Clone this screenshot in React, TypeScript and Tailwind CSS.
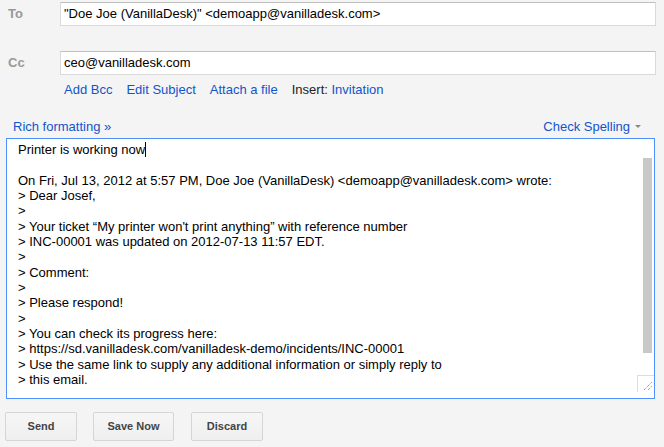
import React from "react";

const lines = [
  "On Fri, Jul 13, 2012 at 5:57 PM, Doe Joe (VanillaDesk) <demoapp@vanilladesk.com> wrote:",
  "> Dear Josef,",
  ">",
  "> Your ticket \u201cMy printer won't print anything\u201d with reference number",
  "> INC-00001 was updated on 2012-07-13 11:57 EDT.",
  ">",
  "> Comment:",
  ">",
  "> Please respond!",
  ">",
  "> You can check its progress here:",
  "> https://sd.vanilladesk.com/vanilladesk-demo/incidents/INC-00001",
  "> Use the same link to supply any additional information or simply reply to",
  "> this email.",
];

function Btn({ label, w }: { label: string; w: string }) {
  return (
    <div
      className={`${w} h-[29px] flex items-center justify-center rounded-[2px] border border-[#d5d5d5] bg-gradient-to-b from-[#f6f6f6] to-[#efefef] text-[11px] font-bold text-[#444]`}
    >
      {label}
    </div>
  );
}

export default function App() {
  return (
    <div
      className="w-[664px] h-[447px] bg-[#f4f4f4] overflow-hidden flex flex-col text-[13px] text-[#222]"
      style={{ fontFamily: '"Liberation Sans", Arial, sans-serif' }}
    >
      {/* To row */}
      <div className="flex items-center mt-[2px]">
        <div className="w-[60px] pl-[8px] font-bold text-[#999]">To</div>
        <div className="w-[596px] h-[24px] bg-white border border-[#d9d9d9] border-t-[#c0c0c0] flex items-center pl-[3px] text-black">
          "Doe Joe (VanillaDesk)" &lt;demoapp@vanilladesk.com&gt;
        </div>
      </div>
      {/* Cc row */}
      <div className="flex items-center mt-[25px]">
        <div className="w-[60px] pl-[8px] font-bold text-[#999]">Cc</div>
        <div className="w-[596px] h-[24px] bg-white border border-[#d9d9d9] border-t-[#c0c0c0] flex items-center pl-[3px] text-black">
          ceo@vanilladesk.com
        </div>
      </div>
      {/* links row */}
      <div className="flex items-center pl-[64px] mt-[7px] leading-[15px] gap-[14px]">
        <span className="text-[#15c]">Add Bcc</span>
        <span className="text-[#15c]">Edit Subject</span>
        <span className="text-[#15c]">Attach a file</span>
        <span>
          <span className="text-[#222]">Insert: </span>
          <span className="text-[#15c]">Invitation</span>
        </span>
      </div>
      {/* rich formatting row */}
      <div className="flex items-center justify-between mt-[22px] pl-[13px] pr-[23px] leading-[15px]">
        <span className="text-[#15c]">Rich formatting »</span>
        <span className="flex items-center gap-[5px]">
          <span className="text-[#15c]">Check Spelling</span>
          <svg width="6" height="4" viewBox="0 0 6 4" className="mt-[1px]">
            <path d="M0 0 L6 0 L3 3 Z" fill="#888" />
          </svg>
        </span>
      </div>
      {/* body */}
      <div className="relative ml-[6px] mt-[4px] w-[649px] h-[261px] bg-white border border-[#4d90fe]">
        <div className="pl-[11px] pt-[3px] leading-[15.33px] text-black whitespace-pre">
          <div>
            Printer is working now
            <span className="inline-block w-[1px] h-[15px] bg-black align-[-3px]" />
          </div>
          <div>&nbsp;</div>
          {lines.map((l, i) => (
            <div key={i}>{l}</div>
          ))}
        </div>
        {/* scrollbar thumb */}
        <div className="absolute left-[636px] top-[19px] w-[9px] h-[195px] bg-[#c8c8c8]" />
        {/* resizer */}
        <div className="absolute left-[630px] top-[236px] w-[17px] h-[17px] bg-white border-l border-t border-[#dcdcdc]">
          <svg width="16" height="16" viewBox="0 0 16 16" className="absolute left-0 top-0">
            <path d="M6 14 L14 6" stroke="#777" strokeWidth="1" strokeDasharray="1 1" />
            <path d="M10 14 L14 10" stroke="#777" strokeWidth="1" strokeDasharray="1 1" />
          </svg>
        </div>
      </div>
      {/* buttons */}
      <div className="flex items-center mt-[13px] pl-[5px] gap-[16px]">
        <Btn label="Send" w="w-[72px]" />
        <Btn label="Save Now" w="w-[81px]" />
        <div className="ml-[1px]">
          <Btn label="Discard" w="w-[72px]" />
        </div>
      </div>
    </div>
  );
}
